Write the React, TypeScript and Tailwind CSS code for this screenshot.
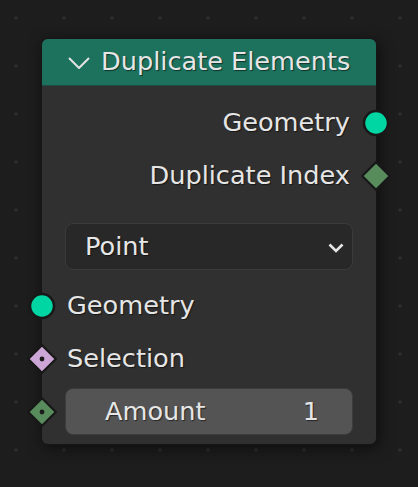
const txt = "text-[25.6px] leading-none text-[#e6e6e6] [text-shadow:1px_1px_1px_rgba(0,0,0,0.55)]";

function Socket({ kind, color, dot, side }: { kind: "circle" | "diamond"; color: string; dot?: boolean; side: "left" | "right" }) {
	const pos = side === "left" ? "left-[-15px]" : "right-[-15px]";
	return (
		<svg width="30" height="30" viewBox="0 0 30 30" className={`absolute top-1/2 -translate-y-1/2 ${pos}`}>
			{kind === "circle" ? (
				<circle cx="15" cy="15" r="12" fill={color} stroke="#181818" strokeWidth="2.5" />
			) : (
				<polygon points="15,1.2 28.8,15 15,28.8 1.2,15" fill={color} stroke="#181818" strokeWidth="2.2" strokeLinejoin="miter" />
			)}
			{dot && <circle cx="15" cy="15" r="2.4" fill="#1a1a1a" />}
		</svg>
	);
}

function OutputRow({ label, kind, color }: { label: string; kind: "circle" | "diamond"; color: string }) {
	return (
		<div className="relative h-[53px] flex items-center justify-end pr-[26px]">
			<span className={txt}>{label}</span>
			<Socket kind={kind} color={color} side="right" />
		</div>
	);
}

function InputRow({ label, kind, color, dot }: { label: string; kind: "circle" | "diamond"; color: string; dot?: boolean }) {
	return (
		<div className="relative h-[53px] flex items-center pl-[25px]">
			<span className={txt}>{label}</span>
			<Socket kind={kind} color={color} dot={dot} side="left" />
		</div>
	);
}

export default function App() {
	return (
		<div
			className="w-[418px] h-[487px] overflow-hidden bg-[#1d1d1d] bg-[radial-gradient(circle,#2b2b2b_1.8px,transparent_1.9px)] bg-[size:48px_48px] bg-[position:-8px_-6px] pt-[38px] pl-[41px]"
			style={{ fontFamily: '"DejaVu Sans", "Liberation Sans", sans-serif' }}
		>
			<div className="w-[336px] rounded-[7px] border border-[#161616] bg-[#303030] shadow-[2px_3px_14px_rgba(0,0,0,0.55)]">
				{/* header */}
				<div className="h-[47px] flex items-center rounded-t-[6px] bg-[#1d725e] border-b border-[#1e4a40] pl-[26px]">
					<svg width="22" height="12" viewBox="0 0 22 12" className="mr-[11px] mt-[1px]">
						<polyline points="1,1 11,11 21,1" fill="none" stroke="#e3e3e3" strokeWidth="2" />
					</svg>
					<span className={txt}>Duplicate Elements</span>
				</div>

				<div className="pt-[10px] pb-[6px]">
					<OutputRow label="Geometry" kind="circle" color="#00d6a3" />
					<OutputRow label="Duplicate Index" kind="diamond" color="#598c5c" />

					{/* domain dropdown */}
					<div className="mx-[23px] mt-[21px] h-[47px] rounded-[8px] border border-[#3b3b3b] bg-[#282828] flex items-center justify-between pl-[19px] pr-[7px]">
						<span className={txt}>Point</span>
						<svg width="18" height="12" viewBox="0 0 18 12" className="mt-[3px]">
							<polyline points="2.5,2.5 9,9 15.5,2.5" fill="none" stroke="#e6e6e6" strokeWidth="2.6" />
						</svg>
					</div>

					<div className="mt-[9px]">
						<InputRow label="Geometry" kind="circle" color="#00d6a3" />
						<InputRow label="Selection" kind="diamond" color="#cca6d6" dot />
						<div className="relative h-[53px] flex items-center px-[23px]">
							<Socket kind="diamond" color="#598c5c" dot side="left" />
							<div className="w-full h-[47px] rounded-[8px] border border-[#3d3d3d] bg-[#545454] flex items-center justify-between pl-[39px] pr-[33px]">
								<span className={txt}>Amount</span>
								<span className={txt}>1</span>
							</div>
						</div>
					</div>
				</div>
			</div>
		</div>
	);
}
